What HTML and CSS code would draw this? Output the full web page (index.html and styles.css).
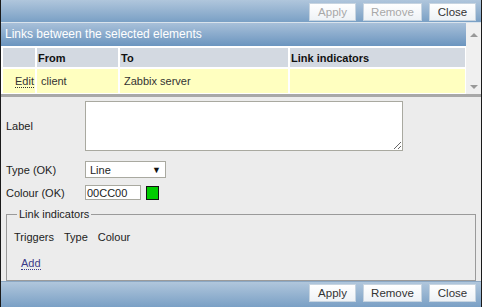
FILE: index.html
```html
<!DOCTYPE html>
<html>
<head>
<meta charset="utf-8">
<link rel="stylesheet" href="styles.css">
</head>
<body>
<div class="dialog">
  <div class="bar bar-top">
    <button class="btn w47 disabled">Apply</button>
    <button class="btn w59 disabled">Remove</button>
    <button class="btn w47">Close</button>
  </div>
  <div class="list">
    <div class="list-main">
      <div class="caption">Links between the selected elements</div>
      <table class="links">
        <thead>
          <tr><th class="c1"></th><th class="c2">From</th><th class="c3">To</th><th class="c4">Link indicators</th></tr>
        </thead>
        <tbody>
          <tr><td class="edit"><a>Edit</a></td><td>client</td><td>Zabbix server</td><td></td></tr>
        </tbody>
      </table>
    </div>
    <div class="scroll">
      <span class="arrow up"></span>
      <span class="arrow down"></span>
    </div>
  </div>
  <div class="form">
    <div class="row row-label">
      <span class="lbl">Label</span>
      <textarea class="ta"></textarea>
    </div>
    <div class="row row-type">
      <span class="lbl">Type (OK)</span>
      <div class="select"><span>Line</span><span class="caret">&#9660;</span></div>
    </div>
    <div class="row row-colour">
      <span class="lbl">Colour (OK)</span>
      <input class="colour" value="00CC00">
      <span class="swatch"></span>
    </div>
    <fieldset class="indicators">
      <legend>Link indicators</legend>
      <div class="ind-head"><span>Triggers</span><span>Type</span><span>Colour</span></div>
      <a class="add">Add</a>
    </fieldset>
  </div>
  <div class="bar bar-bottom">
    <button class="btn w47">Apply</button>
    <button class="btn w59">Remove</button>
    <button class="btn w47">Close</button>
  </div>
</div>
</body>
</html>
```
FILE: styles.css
```css
* { box-sizing: border-box; }
html, body { margin: 0; padding: 0; }
body {
  width: 482px;
  height: 307px;
  overflow: hidden;
  font-family: "Liberation Sans", Arial, sans-serif;
  font-size: 11px;
  color: #222;
  background: #1a1a1a;
}
.dialog {
  width: 482px;
  height: 306px;
  border-left: 1px solid #1a1a1a;
  border-right: 1px solid #1a1a1a;
  background: #ececec;
  display: flex;
  flex-direction: column;
}
.bar {
  display: flex;
  justify-content: flex-end;
  align-items: flex-start;
  gap: 7px;
  padding-right: 5px;
  padding-top: 3px;
  background: linear-gradient(#b0c6dc, #7aa0c5);
  flex: none;
}
.bar-top { height: 23px; border-bottom: 1px solid #d9e3ec; padding-top: 3px; }
.bar-bottom { height: 26px; margin-top: auto; padding-top: 2px; border-top: 1px solid #8ca8c4; }
.btn {
  height: 18px;
  padding: 0;
  background: linear-gradient(#ffffff, #eef2f6);
  border: 1px solid #c7d4e0;
  font-family: "Liberation Sans", Arial, sans-serif;
  font-size: 11.5px;
  color: #333;
  border-radius: 0;
}
.w47 { width: 47px; }
.w59 { width: 59px; }
.btn.disabled { color: #a8a8a8; }
.list {
  display: flex;
  height: 74px;
  flex: none;
  background: #fff;
  border-bottom: 3px solid #a8a8a8;
  overflow: hidden;
}
.list-main { width: 465px; }
.caption {
  height: 23px;
  line-height: 22px;
  padding-left: 4px;
  color: #fff;
  font-size: 12px;
  background: linear-gradient(#a8c0d9, #6b95bf);
}
.links {
  border-collapse: separate;
  border-spacing: 2px 2px;
  margin-top: 0;
  width: 466px;
  table-layout: fixed;
}
.links th {
  background: #d3d9e1;
  height: 19px;
  text-align: left;
  font-weight: bold;
  padding: 0 1px;
  color: #111;
}
.c1 { width: 32px; }
.c2 { width: 81px; }
.c3 { width: 168px; }
.links td {
  background: #ffffc0;
  height: 24px;
  padding: 0 4px;
  color: #333;
}
.links td.edit { text-align: right; padding: 0 1px 0 0; }
.edit a { color: #333; border-bottom: 1px dotted #333; }
.scroll {
  width: 15px;
  background: #f0f0f0;
  position: relative;
}
.arrow {
  position: absolute;
  left: 4px;
  width: 0; height: 0;
  border-left: 4px solid transparent;
  border-right: 4px solid transparent;
}
.arrow.up { top: 10px; border-bottom: 4px solid #999; }
.arrow.down { bottom: 5px; border-top: 4px solid #999; }
.form {
  padding: 4px 5px 0 5px;
  display: flex;
  flex-direction: column;
  flex: none;
}
.row { display: flex; align-items: center; flex: none; }
.lbl { width: 79px; color: #222; }
.ta {
  width: 318px;
  height: 50px;
  border: 1px solid #a9a9a0;
  background: #fff;
  resize: both;
  margin: 0;
}
.row-type { margin-top: 10px; }
.select {
  width: 81px;
  height: 17px;
  background: #fff;
  border: 1px solid #a9a9a0;
  display: flex;
  align-items: center;
  justify-content: space-between;
  padding: 0 4px 0 4px;
  font-size: 11px;
}
.caret { font-size: 9px; color: #111; }
.row-colour { margin-top: 7px; }
.colour {
  width: 56px;
  height: 15px;
  border: 1px solid #a9a9a0;
  padding: 0 1px;
  font-family: "Liberation Sans", Arial, sans-serif;
  font-size: 11px;
  color: #222;
}
.swatch {
  width: 13px;
  height: 14px;
  margin-left: 5px;
  background: #00cc00;
  border: 1px solid #111;
}
.indicators {
  flex: none;
  margin: 8px 0 0 0;
  padding: 11px 7px 10px 7px;
  border: 1px solid #9a9a9a;
}
.indicators legend {
  padding: 0 2px;
  margin-left: 3px;
  color: #222;
}
.ind-head { display: flex; gap: 10px; color: #222; }
.add {
  display: inline-block;
  margin-top: 14px;
  margin-left: 7px;
  color: #3b3b88;
  border-bottom: 1px dotted #3b3b88;
  line-height: 12px;
}
```
